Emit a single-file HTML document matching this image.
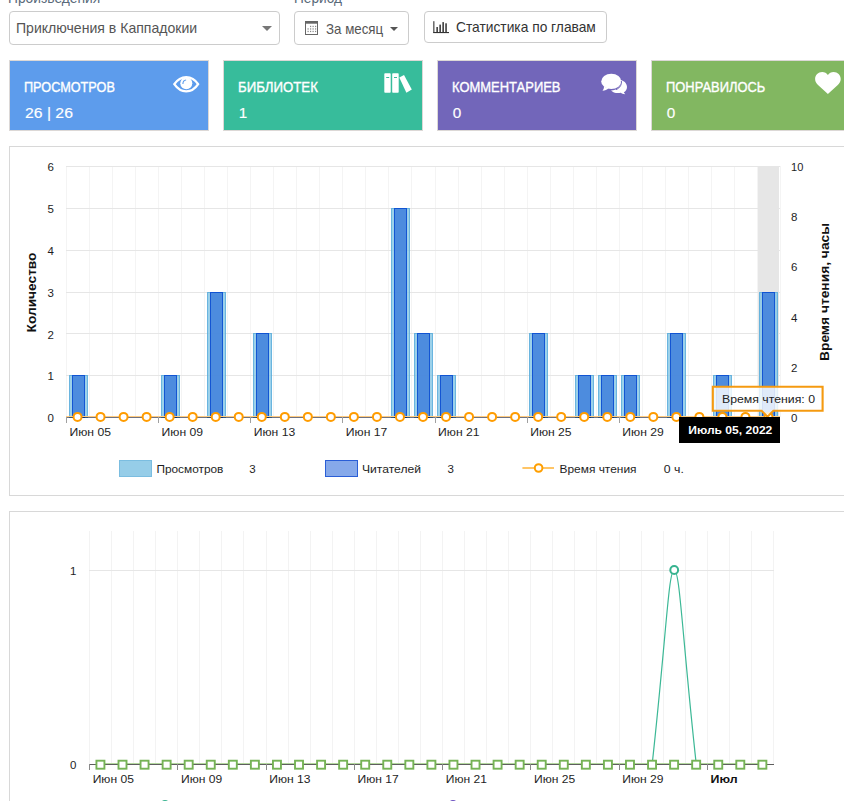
<!DOCTYPE html>
<html><head><meta charset="utf-8"><title>Статистика</title>
<style>
*{box-sizing:border-box;margin:0;padding:0}
html,body{width:844px;height:801px;overflow:hidden;background:#fff}
body{position:relative;font-family:"Liberation Sans", sans-serif;color:#333}
.abs{position:absolute}
.t{position:absolute;white-space:nowrap;transform-origin:0 0;line-height:1}
.sel{position:absolute;border:1px solid #ccc;border-radius:4px;background:#fff}
.card{position:absolute;top:60px;width:200px;height:71px;border:1px solid #dcd8d6}
.card .h{position:absolute;left:14px;top:17.8px;font-size:14px;color:#fff;-webkit-text-stroke:0.35px #fff;white-space:nowrap;transform-origin:0 0}
.card .n{position:absolute;left:14.7px;top:42.9px;font-size:15.3px;color:#fff;-webkit-text-stroke:0.15px #fff;white-space:nowrap;transform-origin:0 0}
.box{position:absolute;left:9px;width:850px;border:1px solid #d8d8d8;background:#fff}
svg text{font-family:"Liberation Sans", sans-serif}
</style></head><body>
<div class="t" style="left:8px;top:-9px;font-size:14px;color:#5a6a7a;transform:scaleX(0.984)">Произведения</div>
<div class="t" style="left:293.5px;top:-9px;font-size:14px;color:#5a6a7a;transform:scaleX(0.976)">Период</div>
<div class="sel" style="left:9px;top:11px;width:271px;height:34px"></div>
<div class="t" style="left:16px;top:21px;font-size:14.5px;color:#555;transform:scaleX(0.97)">Приключения в Каппадокии</div>
<svg class="abs" style="left:262px;top:26px" width="10" height="6"><path d="M0,0 H10 L5,5 Z" fill="#777"/></svg>
<div class="sel" style="left:294px;top:11px;width:115px;height:34px"></div>
<svg style="position:absolute;left:304px;top:20px" width="15" height="16" viewBox="0 0 15 16">
<rect x="1.5" y="1.5" width="12" height="13" fill="none" stroke="#666" stroke-width="1"/>
<rect x="1" y="1.3" width="13" height="2.4" fill="#666"/>
<g fill="#888"><rect x="6" y="5.8" width="1.2" height="1.3"/><rect x="8.5" y="5.8" width="1.2" height="1.3"/><rect x="11" y="5.8" width="1.2" height="1.3"/>
<rect x="3.5" y="8.3" width="1.2" height="1.3"/><rect x="6" y="8.3" width="1.2" height="1.3"/><rect x="8.5" y="8.3" width="1.2" height="1.3"/><rect x="11" y="8.3" width="1.2" height="1.3"/>
<rect x="3.5" y="10.8" width="1.2" height="1.3"/><rect x="6" y="10.8" width="1.2" height="1.3"/><rect x="8.5" y="10.8" width="1.2" height="1.3"/><rect x="11" y="10.8" width="1.2" height="1.3"/></g>
</svg>
<div class="t" style="left:326px;top:21.8px;font-size:14.5px;color:#555;transform:scaleX(0.918)">За месяц</div>
<svg class="abs" style="left:390px;top:26.8px" width="8" height="5"><path d="M0,0 H8 L4,4 Z" fill="#555"/></svg>
<div class="sel" style="left:424px;top:11px;width:183px;height:32px"></div>
<svg style="position:absolute;left:432px;top:20px" width="18" height="14" viewBox="0 0 18 14">
<rect x="1.3" y="1.2" width="1.1" height="11.8" fill="#333"/>
<rect x="1.3" y="12" width="15.7" height="1.1" fill="#333"/>
<rect x="4.4" y="7" width="1.5" height="5" fill="#333"/><rect x="7.4" y="4.6" width="1.5" height="7.4" fill="#333"/><rect x="10.4" y="2.1" width="1.5" height="9.9" fill="#333"/><rect x="13.3" y="3.3" width="1.5" height="8.7" fill="#333"/>
</svg>
<div class="t" style="left:455.5px;top:19.8px;font-size:14.5px;color:#333;transform:scaleX(0.95)">Статистика по главам</div>

<div class="card" style="left:9px;background:#5d9cec"><div class="h" style="transform:scaleX(0.906)">ПРОСМОТРОВ</div><div class="n" style="transform:scaleX(1.03)">26 | 26</div></div>
<svg style="position:absolute;left:173px;top:75px" width="27" height="18" viewBox="0 0 27 18">
<path d="M1.3,9.2 C5,3.8 9,2.1 13.2,2.1 C17.6,2.1 21.6,3.8 25.1,9.2 C21.6,14.6 17.6,16.4 13.2,16.4 C9,16.4 5,14.6 1.3,9.2 Z" fill="none" stroke="#fff" stroke-width="2.3"/>
<circle cx="13.3" cy="8.3" r="6" fill="#fff"/>
<path d="M9.9,9 C9.9,6.6 11.2,5.2 13.1,5" fill="none" stroke="#5d9cec" stroke-width="1.1"/>
</svg>
<div class="card" style="left:223px;background:#37bc9b"><div class="h" style="transform:scaleX(0.944)">БИБЛИОТЕК</div><div class="n">1</div></div>
<svg style="position:absolute;left:383px;top:72px" width="30" height="22" viewBox="0 0 30 22">
<rect x="1.3" y="1.3" width="6.4" height="19.4" rx="0.8" fill="#fff"/>
<rect x="9.2" y="1.3" width="6.5" height="19.4" rx="0.8" fill="#fff"/>
<path d="M16.3,5.5 L21,2.9 L28.8,17.5 L23.4,20.7 Z" fill="#fff"/>
<rect x="3.2" y="5" width="3" height="1" fill="#37bc9b"/>
<rect x="11" y="5" width="3" height="1" fill="#37bc9b"/>
</svg>
<div class="card" style="left:437px;background:#7266ba"><div class="h" style="transform:scaleX(0.926)">КОММЕНТАРИЕВ</div><div class="n">0</div></div>
<svg style="position:absolute;left:600px;top:72px" width="30" height="24" viewBox="0 0 30 24">
<path d="M18.5,7.8 C24,8 27,11.5 27,15 C27,17.5 25.6,19.3 23.8,20.3 C24.2,21.2 24.8,21.6 25.2,22.2 C23.2,22.1 21.6,21.4 20.8,20.8 C19.8,21 19,21.1 18,21.1 C15,21.1 12.5,20 11,18.4 C17,18.4 21,14.6 21,10.5 C21,9.5 20.7,8.5 20,7.9 Z" fill="#fff"/>
<ellipse cx="11.3" cy="9.4" rx="10.1" ry="7.6" fill="#fff"/>
<path d="M4,14.5 C4,16.5 3.4,17.5 2.5,18.7 C5,18.5 7,17.6 8.5,16.4 Z" fill="#fff"/>
<path d="M21.3,9 C22,11.5 20.5,16 16,17.6" fill="none" stroke="#7266ba" stroke-width="1"/>
</svg>
<div class="card" style="left:651px;background:#82b761"><div class="h" style="transform:scaleX(0.923)">ПОНРАВИЛОСЬ</div><div class="n">0</div></div>
<svg style="position:absolute;left:814px;top:71px" width="28" height="24" viewBox="0 0 28 24">
<path d="M13.9,4.1 C12.6,2 10.7,1 8.2,1 C4.2,1 1.1,4.2 1.1,8 C1.1,10.8 2.6,12.6 4.3,14.3 L13.9,23 L23.5,14.3 C25.2,12.6 26.7,10.8 26.7,8 C26.7,4.2 23.6,1 19.6,1 C17.1,1 15.2,2 13.9,4.1 Z" fill="#fff"/>
</svg>

<div class="box" style="top:146px;height:350px"></div>
<div class="box" style="top:511px;height:320px"></div>
<svg class="abs" style="left:0;top:0" width="844" height="801" viewBox="0 0 844 801">
<rect x="757" y="166" width="22" height="251" fill="#e6e6e6"/>
<line x1="66.50" y1="166" x2="66.50" y2="417" stroke="#f4f4f4" stroke-width="1"/>
<line x1="89.50" y1="166" x2="89.50" y2="417" stroke="#f4f4f4" stroke-width="1"/>
<line x1="112.50" y1="166" x2="112.50" y2="417" stroke="#f4f4f4" stroke-width="1"/>
<line x1="135.50" y1="166" x2="135.50" y2="417" stroke="#f4f4f4" stroke-width="1"/>
<line x1="158.50" y1="166" x2="158.50" y2="417" stroke="#f4f4f4" stroke-width="1"/>
<line x1="181.50" y1="166" x2="181.50" y2="417" stroke="#f4f4f4" stroke-width="1"/>
<line x1="204.50" y1="166" x2="204.50" y2="417" stroke="#f4f4f4" stroke-width="1"/>
<line x1="227.50" y1="166" x2="227.50" y2="417" stroke="#f4f4f4" stroke-width="1"/>
<line x1="250.50" y1="166" x2="250.50" y2="417" stroke="#f4f4f4" stroke-width="1"/>
<line x1="273.50" y1="166" x2="273.50" y2="417" stroke="#f4f4f4" stroke-width="1"/>
<line x1="296.50" y1="166" x2="296.50" y2="417" stroke="#f4f4f4" stroke-width="1"/>
<line x1="319.50" y1="166" x2="319.50" y2="417" stroke="#f4f4f4" stroke-width="1"/>
<line x1="342.50" y1="166" x2="342.50" y2="417" stroke="#f4f4f4" stroke-width="1"/>
<line x1="365.50" y1="166" x2="365.50" y2="417" stroke="#f4f4f4" stroke-width="1"/>
<line x1="388.50" y1="166" x2="388.50" y2="417" stroke="#f4f4f4" stroke-width="1"/>
<line x1="411.50" y1="166" x2="411.50" y2="417" stroke="#f4f4f4" stroke-width="1"/>
<line x1="435.50" y1="166" x2="435.50" y2="417" stroke="#f4f4f4" stroke-width="1"/>
<line x1="458.50" y1="166" x2="458.50" y2="417" stroke="#f4f4f4" stroke-width="1"/>
<line x1="481.50" y1="166" x2="481.50" y2="417" stroke="#f4f4f4" stroke-width="1"/>
<line x1="504.50" y1="166" x2="504.50" y2="417" stroke="#f4f4f4" stroke-width="1"/>
<line x1="527.50" y1="166" x2="527.50" y2="417" stroke="#f4f4f4" stroke-width="1"/>
<line x1="550.50" y1="166" x2="550.50" y2="417" stroke="#f4f4f4" stroke-width="1"/>
<line x1="573.50" y1="166" x2="573.50" y2="417" stroke="#f4f4f4" stroke-width="1"/>
<line x1="596.50" y1="166" x2="596.50" y2="417" stroke="#f4f4f4" stroke-width="1"/>
<line x1="619.50" y1="166" x2="619.50" y2="417" stroke="#f4f4f4" stroke-width="1"/>
<line x1="642.50" y1="166" x2="642.50" y2="417" stroke="#f4f4f4" stroke-width="1"/>
<line x1="665.50" y1="166" x2="665.50" y2="417" stroke="#f4f4f4" stroke-width="1"/>
<line x1="688.50" y1="166" x2="688.50" y2="417" stroke="#f4f4f4" stroke-width="1"/>
<line x1="711.50" y1="166" x2="711.50" y2="417" stroke="#f4f4f4" stroke-width="1"/>
<line x1="734.50" y1="166" x2="734.50" y2="417" stroke="#f4f4f4" stroke-width="1"/>
<line x1="757.50" y1="166" x2="757.50" y2="417" stroke="#f4f4f4" stroke-width="1"/>
<line x1="780.50" y1="166" x2="780.50" y2="417" stroke="#f4f4f4" stroke-width="1"/>
<line x1="66.0" y1="375.50" x2="780.0" y2="375.50" stroke="#e6e6e6" stroke-width="1"/>
<line x1="66.0" y1="333.50" x2="780.0" y2="333.50" stroke="#e6e6e6" stroke-width="1"/>
<line x1="66.0" y1="292.50" x2="780.0" y2="292.50" stroke="#e6e6e6" stroke-width="1"/>
<line x1="66.0" y1="250.50" x2="780.0" y2="250.50" stroke="#e6e6e6" stroke-width="1"/>
<line x1="66.0" y1="208.50" x2="780.0" y2="208.50" stroke="#e6e6e6" stroke-width="1"/>
<line x1="66.0" y1="166.50" x2="780.0" y2="166.50" stroke="#e6e6e6" stroke-width="1"/>
<rect x="69.5" y="375.5" width="18" height="42" fill="rgba(128,196,228,0.78)" stroke="rgba(88,172,218,0.85)" stroke-width="1"/>
<rect x="72.5" y="375.5" width="12" height="42" fill="rgba(70,134,220,0.92)" stroke="rgba(14,80,210,0.95)" stroke-width="1"/>
<rect x="161.5" y="375.5" width="18" height="42" fill="rgba(128,196,228,0.78)" stroke="rgba(88,172,218,0.85)" stroke-width="1"/>
<rect x="164.5" y="375.5" width="12" height="42" fill="rgba(70,134,220,0.92)" stroke="rgba(14,80,210,0.95)" stroke-width="1"/>
<rect x="207.5" y="292.5" width="18" height="125" fill="rgba(128,196,228,0.78)" stroke="rgba(88,172,218,0.85)" stroke-width="1"/>
<rect x="210.5" y="292.5" width="12" height="125" fill="rgba(70,134,220,0.92)" stroke="rgba(14,80,210,0.95)" stroke-width="1"/>
<rect x="253.5" y="333.5" width="18" height="84" fill="rgba(128,196,228,0.78)" stroke="rgba(88,172,218,0.85)" stroke-width="1"/>
<rect x="256.5" y="333.5" width="12" height="84" fill="rgba(70,134,220,0.92)" stroke="rgba(14,80,210,0.95)" stroke-width="1"/>
<rect x="391.5" y="208.5" width="18" height="209" fill="rgba(128,196,228,0.78)" stroke="rgba(88,172,218,0.85)" stroke-width="1"/>
<rect x="394.5" y="208.5" width="12" height="209" fill="rgba(70,134,220,0.92)" stroke="rgba(14,80,210,0.95)" stroke-width="1"/>
<rect x="414.5" y="333.5" width="18" height="84" fill="rgba(128,196,228,0.78)" stroke="rgba(88,172,218,0.85)" stroke-width="1"/>
<rect x="417.5" y="333.5" width="12" height="84" fill="rgba(70,134,220,0.92)" stroke="rgba(14,80,210,0.95)" stroke-width="1"/>
<rect x="437.5" y="375.5" width="18" height="42" fill="rgba(128,196,228,0.78)" stroke="rgba(88,172,218,0.85)" stroke-width="1"/>
<rect x="440.5" y="375.5" width="12" height="42" fill="rgba(70,134,220,0.92)" stroke="rgba(14,80,210,0.95)" stroke-width="1"/>
<rect x="529.5" y="333.5" width="18" height="84" fill="rgba(128,196,228,0.78)" stroke="rgba(88,172,218,0.85)" stroke-width="1"/>
<rect x="532.5" y="333.5" width="12" height="84" fill="rgba(70,134,220,0.92)" stroke="rgba(14,80,210,0.95)" stroke-width="1"/>
<rect x="575.5" y="375.5" width="18" height="42" fill="rgba(128,196,228,0.78)" stroke="rgba(88,172,218,0.85)" stroke-width="1"/>
<rect x="578.5" y="375.5" width="12" height="42" fill="rgba(70,134,220,0.92)" stroke="rgba(14,80,210,0.95)" stroke-width="1"/>
<rect x="598.5" y="375.5" width="18" height="42" fill="rgba(128,196,228,0.78)" stroke="rgba(88,172,218,0.85)" stroke-width="1"/>
<rect x="601.5" y="375.5" width="12" height="42" fill="rgba(70,134,220,0.92)" stroke="rgba(14,80,210,0.95)" stroke-width="1"/>
<rect x="621.5" y="375.5" width="18" height="42" fill="rgba(128,196,228,0.78)" stroke="rgba(88,172,218,0.85)" stroke-width="1"/>
<rect x="624.5" y="375.5" width="12" height="42" fill="rgba(70,134,220,0.92)" stroke="rgba(14,80,210,0.95)" stroke-width="1"/>
<rect x="667.5" y="333.5" width="18" height="84" fill="rgba(128,196,228,0.78)" stroke="rgba(88,172,218,0.85)" stroke-width="1"/>
<rect x="670.5" y="333.5" width="12" height="84" fill="rgba(70,134,220,0.92)" stroke="rgba(14,80,210,0.95)" stroke-width="1"/>
<rect x="713.5" y="375.5" width="18" height="42" fill="rgba(128,196,228,0.78)" stroke="rgba(88,172,218,0.85)" stroke-width="1"/>
<rect x="716.5" y="375.5" width="12" height="42" fill="rgba(70,134,220,0.92)" stroke="rgba(14,80,210,0.95)" stroke-width="1"/>
<rect x="759.5" y="292.5" width="18" height="125" fill="rgba(128,196,228,0.78)" stroke="rgba(88,172,218,0.85)" stroke-width="1"/>
<rect x="762.5" y="292.5" width="12" height="125" fill="rgba(70,134,220,0.92)" stroke="rgba(14,80,210,0.95)" stroke-width="1"/>
<line x1="66.0" y1="417.5" x2="780.0" y2="417.5" stroke="rgba(15,20,45,0.6)" stroke-width="1"/>
<line x1="66.50" y1="417" x2="66.50" y2="423" stroke="#a0a0a0" stroke-width="1"/>
<line x1="158.50" y1="417" x2="158.50" y2="423" stroke="#a0a0a0" stroke-width="1"/>
<line x1="250.50" y1="417" x2="250.50" y2="423" stroke="#a0a0a0" stroke-width="1"/>
<line x1="342.50" y1="417" x2="342.50" y2="423" stroke="#a0a0a0" stroke-width="1"/>
<line x1="435.50" y1="417" x2="435.50" y2="423" stroke="#a0a0a0" stroke-width="1"/>
<line x1="527.50" y1="417" x2="527.50" y2="423" stroke="#a0a0a0" stroke-width="1"/>
<line x1="619.50" y1="417" x2="619.50" y2="423" stroke="#a0a0a0" stroke-width="1"/>
<line x1="711.50" y1="417" x2="711.50" y2="423" stroke="#a0a0a0" stroke-width="1"/>
<line x1="66.0" y1="416.5" x2="780.0" y2="416.5" stroke="#ffcb80" stroke-width="1"/>
<circle cx="77.52" cy="416.9" r="4" fill="#fff" stroke="#ff9c00" stroke-width="2"/>
<circle cx="100.55" cy="416.9" r="4" fill="#fff" stroke="#ff9c00" stroke-width="2"/>
<circle cx="123.58" cy="416.9" r="4" fill="#fff" stroke="#ff9c00" stroke-width="2"/>
<circle cx="146.61" cy="416.9" r="4" fill="#fff" stroke="#ff9c00" stroke-width="2"/>
<circle cx="169.65" cy="416.9" r="4" fill="#fff" stroke="#ff9c00" stroke-width="2"/>
<circle cx="192.68" cy="416.9" r="4" fill="#fff" stroke="#ff9c00" stroke-width="2"/>
<circle cx="215.71" cy="416.9" r="4" fill="#fff" stroke="#ff9c00" stroke-width="2"/>
<circle cx="238.74" cy="416.9" r="4" fill="#fff" stroke="#ff9c00" stroke-width="2"/>
<circle cx="261.77" cy="416.9" r="4" fill="#fff" stroke="#ff9c00" stroke-width="2"/>
<circle cx="284.81" cy="416.9" r="4" fill="#fff" stroke="#ff9c00" stroke-width="2"/>
<circle cx="307.84" cy="416.9" r="4" fill="#fff" stroke="#ff9c00" stroke-width="2"/>
<circle cx="330.87" cy="416.9" r="4" fill="#fff" stroke="#ff9c00" stroke-width="2"/>
<circle cx="353.90" cy="416.9" r="4" fill="#fff" stroke="#ff9c00" stroke-width="2"/>
<circle cx="376.94" cy="416.9" r="4" fill="#fff" stroke="#ff9c00" stroke-width="2"/>
<circle cx="399.97" cy="416.9" r="4" fill="#fff" stroke="#ff9c00" stroke-width="2"/>
<circle cx="423.00" cy="416.9" r="4" fill="#fff" stroke="#ff9c00" stroke-width="2"/>
<circle cx="446.03" cy="416.9" r="4" fill="#fff" stroke="#ff9c00" stroke-width="2"/>
<circle cx="469.06" cy="416.9" r="4" fill="#fff" stroke="#ff9c00" stroke-width="2"/>
<circle cx="492.10" cy="416.9" r="4" fill="#fff" stroke="#ff9c00" stroke-width="2"/>
<circle cx="515.13" cy="416.9" r="4" fill="#fff" stroke="#ff9c00" stroke-width="2"/>
<circle cx="538.16" cy="416.9" r="4" fill="#fff" stroke="#ff9c00" stroke-width="2"/>
<circle cx="561.19" cy="416.9" r="4" fill="#fff" stroke="#ff9c00" stroke-width="2"/>
<circle cx="584.23" cy="416.9" r="4" fill="#fff" stroke="#ff9c00" stroke-width="2"/>
<circle cx="607.26" cy="416.9" r="4" fill="#fff" stroke="#ff9c00" stroke-width="2"/>
<circle cx="630.29" cy="416.9" r="4" fill="#fff" stroke="#ff9c00" stroke-width="2"/>
<circle cx="653.32" cy="416.9" r="4" fill="#fff" stroke="#ff9c00" stroke-width="2"/>
<circle cx="676.35" cy="416.9" r="4" fill="#fff" stroke="#ff9c00" stroke-width="2"/>
<circle cx="699.39" cy="416.9" r="4" fill="#fff" stroke="#ff9c00" stroke-width="2"/>
<circle cx="722.42" cy="416.9" r="4" fill="#fff" stroke="#ff9c00" stroke-width="2"/>
<circle cx="745.45" cy="416.9" r="4" fill="#fff" stroke="#ff9c00" stroke-width="2"/>
<circle cx="768.48" cy="416.9" r="4" fill="#fff" stroke="#ff9c00" stroke-width="2"/>
<text x="69.50" y="436.0" font-size="11.5" fill="#1e1e1e" text-anchor="start" font-weight="normal" textLength="41.5" lengthAdjust="spacingAndGlyphs" >Июн 05</text>
<text x="161.63" y="436.0" font-size="11.5" fill="#1e1e1e" text-anchor="start" font-weight="normal" textLength="41.5" lengthAdjust="spacingAndGlyphs" >Июн 09</text>
<text x="253.76" y="436.0" font-size="11.5" fill="#1e1e1e" text-anchor="start" font-weight="normal" textLength="41.5" lengthAdjust="spacingAndGlyphs" >Июн 13</text>
<text x="345.89" y="436.0" font-size="11.5" fill="#1e1e1e" text-anchor="start" font-weight="normal" textLength="41.5" lengthAdjust="spacingAndGlyphs" >Июн 17</text>
<text x="438.02" y="436.0" font-size="11.5" fill="#1e1e1e" text-anchor="start" font-weight="normal" textLength="41.5" lengthAdjust="spacingAndGlyphs" >Июн 21</text>
<text x="530.15" y="436.0" font-size="11.5" fill="#1e1e1e" text-anchor="start" font-weight="normal" textLength="41.5" lengthAdjust="spacingAndGlyphs" >Июн 25</text>
<text x="622.27" y="436.0" font-size="11.5" fill="#1e1e1e" text-anchor="start" font-weight="normal" textLength="41.5" lengthAdjust="spacingAndGlyphs" >Июн 29</text>
<text x="54" y="422.20" font-size="11.5" fill="#1e1e1e" text-anchor="end" font-weight="normal" >0</text>
<text x="54" y="380.40" font-size="11.5" fill="#1e1e1e" text-anchor="end" font-weight="normal" >1</text>
<text x="54" y="338.60" font-size="11.5" fill="#1e1e1e" text-anchor="end" font-weight="normal" >2</text>
<text x="54" y="296.80" font-size="11.5" fill="#1e1e1e" text-anchor="end" font-weight="normal" >3</text>
<text x="54" y="255.00" font-size="11.5" fill="#1e1e1e" text-anchor="end" font-weight="normal" >4</text>
<text x="54" y="213.20" font-size="11.5" fill="#1e1e1e" text-anchor="end" font-weight="normal" >5</text>
<text x="54" y="171.40" font-size="11.5" fill="#1e1e1e" text-anchor="end" font-weight="normal" >6</text>
<text x="791" y="421.70" font-size="11.5" fill="#1e1e1e" text-anchor="start" font-weight="normal" >0</text>
<text x="791" y="371.60" font-size="11.5" fill="#1e1e1e" text-anchor="start" font-weight="normal" >2</text>
<text x="791" y="321.50" font-size="11.5" fill="#1e1e1e" text-anchor="start" font-weight="normal" >4</text>
<text x="791" y="271.40" font-size="11.5" fill="#1e1e1e" text-anchor="start" font-weight="normal" >6</text>
<text x="791" y="221.30" font-size="11.5" fill="#1e1e1e" text-anchor="start" font-weight="normal" >8</text>
<text x="791" y="171.20" font-size="11.5" fill="#1e1e1e" text-anchor="start" font-weight="normal" textLength="12.3" lengthAdjust="spacingAndGlyphs" >10</text>
<text transform="translate(36,292.5) rotate(-90)" x="0" y="0" font-size="12" font-weight="bold" fill="#111" text-anchor="middle" textLength="80" lengthAdjust="spacingAndGlyphs">Количество</text>
<text transform="translate(828.7,292) rotate(-90)" x="0" y="0" font-size="12" font-weight="bold" fill="#111" text-anchor="middle" textLength="138" lengthAdjust="spacingAndGlyphs">Время чтения, часы</text>
<rect x="119.5" y="460.5" width="32" height="16" fill="#96cde8" stroke="#7bbde0" stroke-width="1"/>
<text x="156.4" y="472.7" font-size="11.5" fill="#1e1e1e" text-anchor="start" font-weight="normal" textLength="67" lengthAdjust="spacingAndGlyphs" >Просмотров</text>
<text x="249.3" y="472.7" font-size="11.5" fill="#1e1e1e" text-anchor="start" font-weight="normal" >3</text>
<rect x="325.5" y="460.5" width="32" height="16" fill="#86a9ea" stroke="#2a5ed6" stroke-width="1"/>
<text x="362" y="472.7" font-size="11.5" fill="#1e1e1e" text-anchor="start" font-weight="normal" textLength="59" lengthAdjust="spacingAndGlyphs" >Читателей</text>
<text x="447.4" y="472.7" font-size="11.5" fill="#1e1e1e" text-anchor="start" font-weight="normal" >3</text>
<line x1="522.4" y1="468" x2="554" y2="468" stroke="#ff9f00" stroke-width="1.2"/>
<circle cx="538.6" cy="468" r="3.8" fill="#fff" stroke="#ff9f00" stroke-width="2"/>
<text x="559.5" y="472.7" font-size="11.5" fill="#1e1e1e" text-anchor="start" font-weight="normal" textLength="77" lengthAdjust="spacingAndGlyphs" >Время чтения</text>
<text x="663.8" y="472.7" font-size="11.5" fill="#1e1e1e" text-anchor="start" font-weight="normal" textLength="20" lengthAdjust="spacingAndGlyphs" >0 ч.</text>
<path d="M712.8,386.8 H822.6 V410.8 H773.4 L767.5,416.7 L761.6,410.8 H712.8 Z" fill="rgba(255,255,255,0.82)" stroke="#f59a10" stroke-width="2.1"/>
<text x="722" y="402.7" font-size="11.5" fill="#222" text-anchor="start" font-weight="normal" textLength="93" lengthAdjust="spacingAndGlyphs" >Время чтения: 0</text>
<rect x="679" y="417" width="101" height="26" fill="#000"/>
<text x="688.3" y="433.7" font-size="10.5" fill="#fff" text-anchor="start" font-weight="bold" textLength="84" lengthAdjust="spacingAndGlyphs" >Июль 05, 2022</text>
<line x1="89.50" y1="531" x2="89.50" y2="764" stroke="#f3f3f3" stroke-width="1"/>
<line x1="111.50" y1="531" x2="111.50" y2="764" stroke="#f3f3f3" stroke-width="1"/>
<line x1="133.50" y1="531" x2="133.50" y2="764" stroke="#f3f3f3" stroke-width="1"/>
<line x1="155.50" y1="531" x2="155.50" y2="764" stroke="#f3f3f3" stroke-width="1"/>
<line x1="177.50" y1="531" x2="177.50" y2="764" stroke="#f3f3f3" stroke-width="1"/>
<line x1="199.50" y1="531" x2="199.50" y2="764" stroke="#f3f3f3" stroke-width="1"/>
<line x1="221.50" y1="531" x2="221.50" y2="764" stroke="#f3f3f3" stroke-width="1"/>
<line x1="243.50" y1="531" x2="243.50" y2="764" stroke="#f3f3f3" stroke-width="1"/>
<line x1="266.50" y1="531" x2="266.50" y2="764" stroke="#f3f3f3" stroke-width="1"/>
<line x1="288.50" y1="531" x2="288.50" y2="764" stroke="#f3f3f3" stroke-width="1"/>
<line x1="310.50" y1="531" x2="310.50" y2="764" stroke="#f3f3f3" stroke-width="1"/>
<line x1="332.50" y1="531" x2="332.50" y2="764" stroke="#f3f3f3" stroke-width="1"/>
<line x1="354.50" y1="531" x2="354.50" y2="764" stroke="#f3f3f3" stroke-width="1"/>
<line x1="376.50" y1="531" x2="376.50" y2="764" stroke="#f3f3f3" stroke-width="1"/>
<line x1="398.50" y1="531" x2="398.50" y2="764" stroke="#f3f3f3" stroke-width="1"/>
<line x1="420.50" y1="531" x2="420.50" y2="764" stroke="#f3f3f3" stroke-width="1"/>
<line x1="442.50" y1="531" x2="442.50" y2="764" stroke="#f3f3f3" stroke-width="1"/>
<line x1="464.50" y1="531" x2="464.50" y2="764" stroke="#f3f3f3" stroke-width="1"/>
<line x1="486.50" y1="531" x2="486.50" y2="764" stroke="#f3f3f3" stroke-width="1"/>
<line x1="508.50" y1="531" x2="508.50" y2="764" stroke="#f3f3f3" stroke-width="1"/>
<line x1="530.50" y1="531" x2="530.50" y2="764" stroke="#f3f3f3" stroke-width="1"/>
<line x1="552.50" y1="531" x2="552.50" y2="764" stroke="#f3f3f3" stroke-width="1"/>
<line x1="574.50" y1="531" x2="574.50" y2="764" stroke="#f3f3f3" stroke-width="1"/>
<line x1="596.50" y1="531" x2="596.50" y2="764" stroke="#f3f3f3" stroke-width="1"/>
<line x1="619.50" y1="531" x2="619.50" y2="764" stroke="#f3f3f3" stroke-width="1"/>
<line x1="641.50" y1="531" x2="641.50" y2="764" stroke="#f3f3f3" stroke-width="1"/>
<line x1="663.50" y1="531" x2="663.50" y2="764" stroke="#f3f3f3" stroke-width="1"/>
<line x1="685.50" y1="531" x2="685.50" y2="764" stroke="#f3f3f3" stroke-width="1"/>
<line x1="707.50" y1="531" x2="707.50" y2="764" stroke="#f3f3f3" stroke-width="1"/>
<line x1="729.50" y1="531" x2="729.50" y2="764" stroke="#f3f3f3" stroke-width="1"/>
<line x1="751.50" y1="531" x2="751.50" y2="764" stroke="#f3f3f3" stroke-width="1"/>
<line x1="773.50" y1="531" x2="773.50" y2="764" stroke="#f3f3f3" stroke-width="1"/>
<line x1="89" y1="570.5" x2="774" y2="570.5" stroke="#e6e6e6" stroke-width="1"/>
<line x1="89" y1="764.5" x2="774" y2="764.5" stroke="#5e5e5e" stroke-width="1"/>
<line x1="89.50" y1="764" x2="89.50" y2="770" stroke="#8a8a8a" stroke-width="1"/>
<line x1="177.50" y1="764" x2="177.50" y2="770" stroke="#8a8a8a" stroke-width="1"/>
<line x1="266.50" y1="764" x2="266.50" y2="770" stroke="#8a8a8a" stroke-width="1"/>
<line x1="354.50" y1="764" x2="354.50" y2="770" stroke="#8a8a8a" stroke-width="1"/>
<line x1="442.50" y1="764" x2="442.50" y2="770" stroke="#8a8a8a" stroke-width="1"/>
<line x1="530.50" y1="764" x2="530.50" y2="770" stroke="#8a8a8a" stroke-width="1"/>
<line x1="619.50" y1="764" x2="619.50" y2="770" stroke="#8a8a8a" stroke-width="1"/>
<line x1="707.50" y1="764" x2="707.50" y2="770" stroke="#8a8a8a" stroke-width="1"/>
<path d="M652.15,764.4 C666.25,636.10 668.46,570 674.21,570 C679.96,570 682.17,636.10 696.27,764.4" fill="none" stroke="#3cb896" stroke-width="1.2"/>
<line x1="100.53" y1="763.5" x2="762.47" y2="763.5" stroke="#b3d79e" stroke-width="1"/>
<rect x="96.43" y="760.70" width="8" height="8" fill="#fff" stroke="#76b356" stroke-width="1.9"/>
<rect x="118.50" y="760.70" width="8" height="8" fill="#fff" stroke="#76b356" stroke-width="1.9"/>
<rect x="140.56" y="760.70" width="8" height="8" fill="#fff" stroke="#76b356" stroke-width="1.9"/>
<rect x="162.63" y="760.70" width="8" height="8" fill="#fff" stroke="#76b356" stroke-width="1.9"/>
<rect x="184.69" y="760.70" width="8" height="8" fill="#fff" stroke="#76b356" stroke-width="1.9"/>
<rect x="206.75" y="760.70" width="8" height="8" fill="#fff" stroke="#76b356" stroke-width="1.9"/>
<rect x="228.82" y="760.70" width="8" height="8" fill="#fff" stroke="#76b356" stroke-width="1.9"/>
<rect x="250.88" y="760.70" width="8" height="8" fill="#fff" stroke="#76b356" stroke-width="1.9"/>
<rect x="272.95" y="760.70" width="8" height="8" fill="#fff" stroke="#76b356" stroke-width="1.9"/>
<rect x="295.01" y="760.70" width="8" height="8" fill="#fff" stroke="#76b356" stroke-width="1.9"/>
<rect x="317.08" y="760.70" width="8" height="8" fill="#fff" stroke="#76b356" stroke-width="1.9"/>
<rect x="339.14" y="760.70" width="8" height="8" fill="#fff" stroke="#76b356" stroke-width="1.9"/>
<rect x="361.21" y="760.70" width="8" height="8" fill="#fff" stroke="#76b356" stroke-width="1.9"/>
<rect x="383.27" y="760.70" width="8" height="8" fill="#fff" stroke="#76b356" stroke-width="1.9"/>
<rect x="405.34" y="760.70" width="8" height="8" fill="#fff" stroke="#76b356" stroke-width="1.9"/>
<rect x="427.40" y="760.70" width="8" height="8" fill="#fff" stroke="#76b356" stroke-width="1.9"/>
<rect x="449.46" y="760.70" width="8" height="8" fill="#fff" stroke="#76b356" stroke-width="1.9"/>
<rect x="471.53" y="760.70" width="8" height="8" fill="#fff" stroke="#76b356" stroke-width="1.9"/>
<rect x="493.59" y="760.70" width="8" height="8" fill="#fff" stroke="#76b356" stroke-width="1.9"/>
<rect x="515.66" y="760.70" width="8" height="8" fill="#fff" stroke="#76b356" stroke-width="1.9"/>
<rect x="537.72" y="760.70" width="8" height="8" fill="#fff" stroke="#76b356" stroke-width="1.9"/>
<rect x="559.79" y="760.70" width="8" height="8" fill="#fff" stroke="#76b356" stroke-width="1.9"/>
<rect x="581.85" y="760.70" width="8" height="8" fill="#fff" stroke="#76b356" stroke-width="1.9"/>
<rect x="603.92" y="760.70" width="8" height="8" fill="#fff" stroke="#76b356" stroke-width="1.9"/>
<rect x="625.98" y="760.70" width="8" height="8" fill="#fff" stroke="#76b356" stroke-width="1.9"/>
<rect x="648.05" y="760.70" width="8" height="8" fill="#fff" stroke="#76b356" stroke-width="1.9"/>
<rect x="670.11" y="760.70" width="8" height="8" fill="#fff" stroke="#76b356" stroke-width="1.9"/>
<rect x="692.17" y="760.70" width="8" height="8" fill="#fff" stroke="#76b356" stroke-width="1.9"/>
<rect x="714.24" y="760.70" width="8" height="8" fill="#fff" stroke="#76b356" stroke-width="1.9"/>
<rect x="736.30" y="760.70" width="8" height="8" fill="#fff" stroke="#76b356" stroke-width="1.9"/>
<rect x="758.37" y="760.70" width="8" height="8" fill="#fff" stroke="#76b356" stroke-width="1.9"/>
<circle cx="674.21" cy="570" r="3.9" fill="#fff" stroke="#37b38f" stroke-width="2"/>
<text x="92.70" y="782.8" font-size="11.5" fill="#1e1e1e" text-anchor="start" font-weight="normal" textLength="41.2" lengthAdjust="spacingAndGlyphs" >Июн 05</text>
<text x="180.96" y="782.8" font-size="11.5" fill="#1e1e1e" text-anchor="start" font-weight="normal" textLength="41.2" lengthAdjust="spacingAndGlyphs" >Июн 09</text>
<text x="269.22" y="782.8" font-size="11.5" fill="#1e1e1e" text-anchor="start" font-weight="normal" textLength="41.2" lengthAdjust="spacingAndGlyphs" >Июн 13</text>
<text x="357.47" y="782.8" font-size="11.5" fill="#1e1e1e" text-anchor="start" font-weight="normal" textLength="41.2" lengthAdjust="spacingAndGlyphs" >Июн 17</text>
<text x="445.73" y="782.8" font-size="11.5" fill="#1e1e1e" text-anchor="start" font-weight="normal" textLength="41.2" lengthAdjust="spacingAndGlyphs" >Июн 21</text>
<text x="533.99" y="782.8" font-size="11.5" fill="#1e1e1e" text-anchor="start" font-weight="normal" textLength="41.2" lengthAdjust="spacingAndGlyphs" >Июн 25</text>
<text x="622.25" y="782.8" font-size="11.5" fill="#1e1e1e" text-anchor="start" font-weight="normal" textLength="41.2" lengthAdjust="spacingAndGlyphs" >Июн 29</text>
<text x="710.51" y="782.8" font-size="11.5" fill="#111" text-anchor="start" font-weight="bold" textLength="27" lengthAdjust="spacingAndGlyphs" >Июл</text>
<text x="76.5" y="575" font-size="11.5" fill="#1e1e1e" text-anchor="end" font-weight="normal" >1</text>
<text x="76.5" y="768.8" font-size="11.5" fill="#1e1e1e" text-anchor="end" font-weight="normal" >0</text>
<circle cx="165" cy="805" r="5" fill="#37b38f"/>
<circle cx="453" cy="805" r="5" fill="#6a4fc0"/>
</svg>
</body></html>
